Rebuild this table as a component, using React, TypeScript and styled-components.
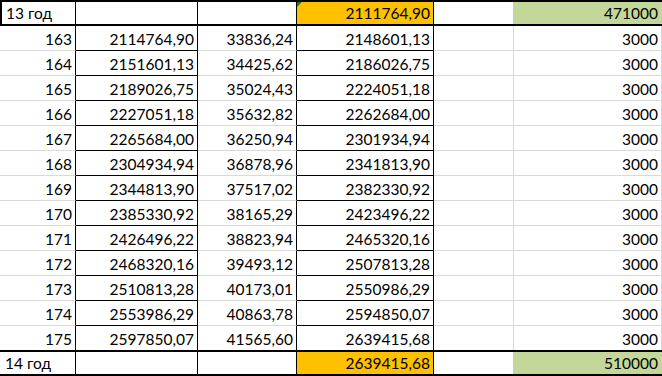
import React from "react";
import styled, { createGlobalStyle, css } from "styled-components";

type Fill = "none" | "orange" | "green";
type Line = "black" | "grey" | "green" | "none";

interface CellProps {
  $right?: Line;
  $bottom?: Line;
  $fill?: Fill;
  $align?: "left" | "right";
  $leftEdge?: boolean;
  $marker?: boolean;
}

const COLORS = {
  orange: "#ffc000",
  green: "#c4d79b",
  grid: "#d9d9d9",
};

const lineColor = (l?: Line) =>
  l === "black" ? "#000" : l === "green" ? COLORS.green : l === "none" ? "transparent" : COLORS.grid;

const COLS = "76px 122px 99px 137px 80px 148px";

const rows: [number, string, string, string][] = [
  [163, "2114764,90", "33836,24", "2148601,13"],
  [164, "2151601,13", "34425,62", "2186026,75"],
  [165, "2189026,75", "35024,43", "2224051,18"],
  [166, "2227051,18", "35632,82", "2262684,00"],
  [167, "2265684,00", "36250,94", "2301934,94"],
  [168, "2304934,94", "36878,96", "2341813,90"],
  [169, "2344813,90", "37517,02", "2382330,92"],
  [170, "2385330,92", "38165,29", "2423496,22"],
  [171, "2426496,22", "38823,94", "2465320,16"],
  [172, "2468320,16", "39493,12", "2507813,28"],
  [173, "2510813,28", "40173,01", "2550986,29"],
  [174, "2553986,29", "40863,78", "2594850,07"],
  [175, "2597850,07", "41565,60", "2639415,68"],
];

const App = () => {
  const renderTotal = (label: string, sum: string, total: string, first: boolean) => (
    <TotalRow>
      <Cell $right="black" $bottom="none" $align="left" $leftEdge={first}>
        {label}
      </Cell>
      <Cell $right="black" $bottom="none" />
      <Cell $right="black" $bottom="none" />
      <Cell $right="black" $bottom="none" $fill="orange" $marker={first}>
        {sum}
      </Cell>
      <Cell $right="green" $bottom="none" />
      <Cell $right="none" $bottom="none" $fill="green">
        {total}
      </Cell>
    </TotalRow>
  );

  return (
    <>
      <GlobalStyle />
      <Sheet>
        {renderTotal("13 год", "2111764,90", "471000", true)}
        {rows.map(([n, a, b, c], i) => {
          const last = i === rows.length - 1;
          return (
            <DataRow key={n}>
              <Cell $right="black" $bottom={last ? "none" : "grey"}>{n}</Cell>
              <Cell $right="black" $bottom={last ? "none" : "black"}>{a}</Cell>
              <Cell $right="black" $bottom={last ? "none" : "grey"}>{b}</Cell>
              <Cell $right="black" $bottom={last ? "none" : "black"}>{c}</Cell>
              <Cell $right="grey" $bottom={last ? "none" : "grey"} />
              <Cell $right="grey" $bottom={last ? "none" : "grey"}>3000</Cell>
            </DataRow>
          );
        })}
        {renderTotal("14 год", "2639415,68", "510000", false)}
      </Sheet>
    </>
  );
};

const GlobalStyle = createGlobalStyle`
  html, body {
    margin: 0;
    padding: 0;
    background: #fff;
  }
  body {
    font-family: Lato, "Liberation Sans", sans-serif;
    color: #000;
  }
`;

const Sheet = styled.div`
  width: 662px;
  height: 376px;
  overflow: hidden;
  background: #fff;
`;

const DataRow = styled.div`
  display: grid;
  grid-template-columns: ${COLS};
  height: 25px;

  &:nth-last-child(2) {
    height: 24px;
  }
`;

const TotalRow = styled.div`
  box-sizing: border-box;
  display: grid;
  grid-template-columns: ${COLS};
  height: 26px;
  border-top: 2px solid #000;
  border-bottom: 2px solid #000;
`;

const Cell = styled.div<CellProps>`
  position: relative;
  box-sizing: border-box;
  display: flex;
  align-items: flex-end;
  justify-content: ${(p) => (p.$align === "left" ? "flex-start" : "flex-end")};
  padding: 0 3px 3px 5px;
  font-size: 15.5px;
  line-height: 1;
  white-space: nowrap;
  border-right: 1px solid ${(p) => lineColor(p.$right)};
  border-bottom: ${(p) => (p.$bottom === "none" ? "0" : `1px solid ${lineColor(p.$bottom)}`)};
  background: ${(p) =>
    p.$fill === "orange" ? COLORS.orange : p.$fill === "green" ? COLORS.green : "transparent"};

  ${(p) =>
    p.$leftEdge &&
    css`
      border-left: 2px solid #000;
      padding-left: 4px;
    `}

  ${(p) =>
    p.$marker &&
    css`
      &::before {
        content: "";
        position: absolute;
        top: 0;
        left: 0;
        border-top: 5px solid #1e7b34;
        border-right: 5px solid transparent;
      }
    `}
`;

export default App;
